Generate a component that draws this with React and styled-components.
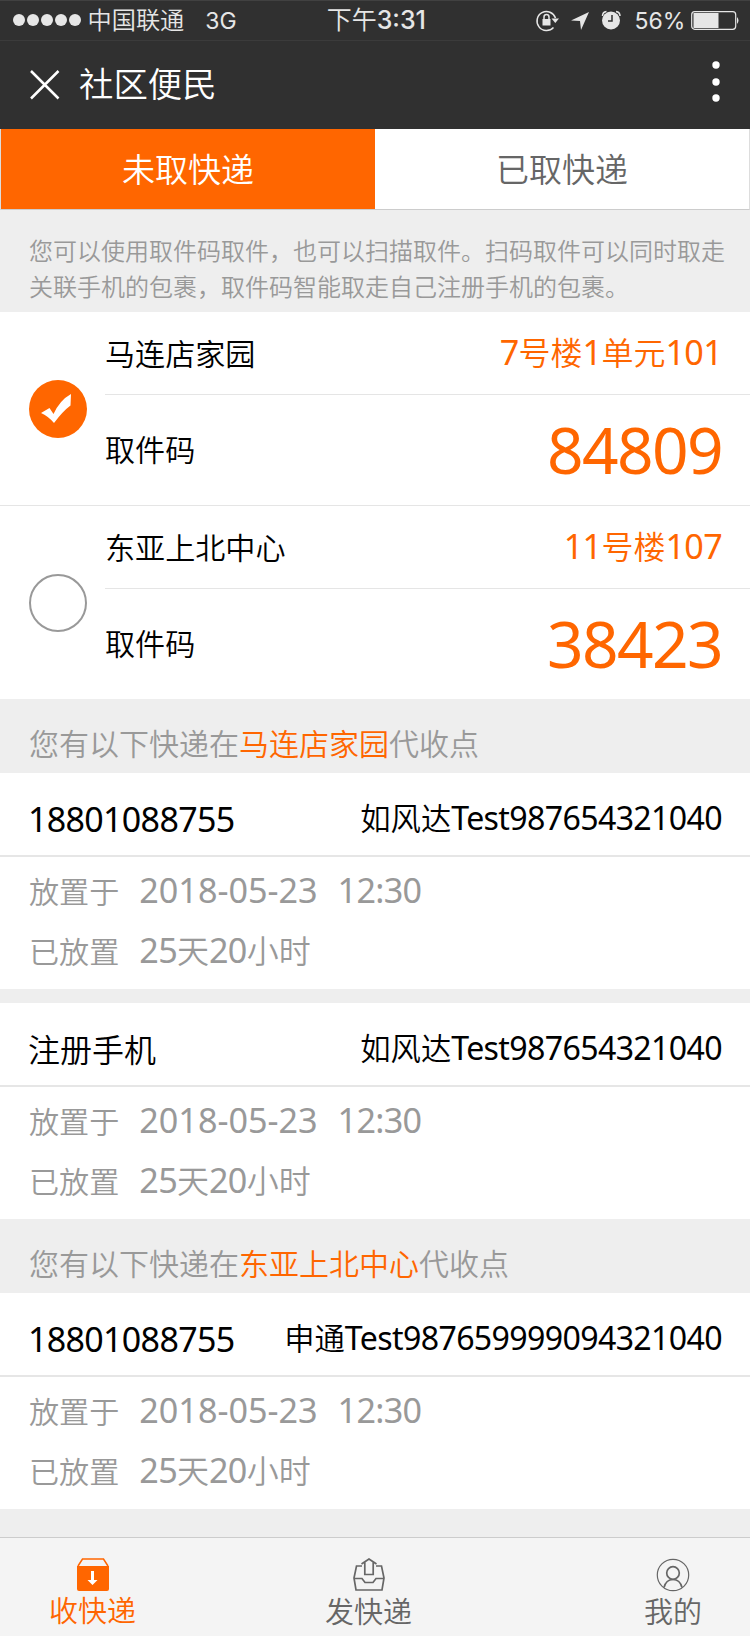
import React from "react";
import styled, { createGlobalStyle, css } from "styled-components";

const ORANGE = "#ff6600";
const CJK = '"Noto Sans CJK SC DemiLight", "Noto Sans CJK SC", sans-serif';

const GlobalStyle = createGlobalStyle`
  *, *::before, *::after { box-sizing: border-box; }
  body {
    margin: 0;
    background: #eee;
    color: #000;
    font-family: "Noto Sans", ${CJK};
    font-weight: 400;
  }
`;

const Page = styled.div`
  width: 750px;
  height: 1636px;
  display: flex;
  flex-direction: column;
  background: #eee;
  overflow: hidden;
`;

const Text = styled.span`
  display: block;
  white-space: pre;
  flex: none;
  line-height: 1;
  font-size: ${(p) => p.$size}px;
  color: ${(p) => p.$color || "inherit"};
  letter-spacing: ${(p) => p.$track || 0}px;
  margin-top: ${(p) => p.$top || 0}px;
  margin-left: ${(p) => p.$left || 0}px;
  font-weight: ${(p) => p.$weight || "inherit"};
`;

const Latin = styled.span`
  font-size: ${(p) => p.$scale}em;
  line-height: 0;
  letter-spacing: ${(p) => p.$spacing}em;
`;

/* Latin letters and digits are set slightly larger than the Han characters around them. */
function Mixed({ children, scale = 1.068, spacing = -0.02 }) {
  return children
    .split(/([\x21-\x7e]+)/)
    .filter(Boolean)
    .map((part, i) =>
      /^[\x21-\x7e]/.test(part) ? (
        <Latin key={i} $scale={scale} $spacing={spacing}>{part}</Latin>
      ) : (
        part
      )
    );
}

const StatusBar = styled.header`
  height: 41px;
  flex: none;
  display: flex;
  align-items: flex-start;
  padding-left: 12.5px;
  background: #303030;
  color: #e6e6e6;
  border-top: 1px solid #414141;
  border-bottom: 1px solid #3b3b3b;
  font-family: Inter, ${CJK};
`;

const Signal = styled.div`
  display: flex;
  gap: 2px;
  margin-top: 13px;
`;

const SignalDot = styled.i`
  width: 12px;
  height: 12px;
  border-radius: 50%;
  background: #e6e6e6;
`;

const StatusIcons = styled.svg`
  flex: none;
  display: block;
  width: ${(p) => p.$w}px;
  height: 38px;
  margin-left: ${(p) => p.$left || 0}px;
`;

const NavBar = styled.nav`
  height: 88px;
  flex: none;
  display: flex;
  align-items: flex-start;
  background: #303030;
  color: #fff;
`;

const CloseIcon = styled.svg`
  width: 32px;
  height: 32px;
  margin: 28px 0 0 29px;
`;

const MoreIcon = styled.svg`
  width: 8px;
  height: 44px;
  margin: 20px 30px 0 auto;
`;

const Tabs = styled.div`
  height: 81px;
  flex: none;
  display: grid;
  grid-template-columns: 1fr 1fr;
  border: 1px solid #ddd;
  border-top: 0;
  border-bottom-color: #ccc;
  background: #fff;
`;

const Tab = styled.div`
  display: flex;
  justify-content: center;
  background: ${(p) => (p.$active ? ORANGE : "#fff")};
  color: ${(p) => (p.$active ? "#fff" : "#666")};
`;

const Notice = styled.p`
  height: 102px;
  flex: none;
  margin: 0;
  padding: 22px 0 0 29px;
  font-family: ${CJK};
  font-size: 24px;
  line-height: 36px;
  color: #999;
  white-space: nowrap;
`;

const Choice = styled.section`
  height: ${(p) => (p.$last ? 193 : 194)}px;
  flex: none;
  display: flex;
  background: #fff;
  border-bottom: ${(p) => (p.$last ? 0 : 1)}px solid #e5e5e5;
`;

const Radio = styled.div`
  width: 58px;
  height: 58px;
  flex: none;
  margin: 68px 18px 0 29px;
  border-radius: 50%;
  ${(p) =>
    p.$checked
      ? css`background: ${ORANGE};`
      : css`border: 2px solid #999;`}
`;

const ChoiceBody = styled.div`
  flex: 1;
  display: flex;
  flex-direction: column;
`;

const ChoiceRow = styled.div`
  height: ${(p) => (p.$tall ? 110 : 83)}px;
  padding-right: 28px;
  display: flex;
  justify-content: space-between;
  align-items: flex-start;
  border-bottom: ${(p) => (p.$tall ? 0 : 1)}px solid #e5e5e5;
`;

const GroupTitle = styled.h2`
  height: 74px;
  flex: none;
  margin: 0;
  padding: 28px 0 0 29px;
  font-size: 30px;
  line-height: 1;
  font-weight: 400;
  font-family: ${CJK};
  color: #999;
  white-space: nowrap;
`;

const Place = styled.span`
  color: ${ORANGE};
`;

const Parcel = styled.article`
  height: 216px;
  flex: none;
  background: #fff;
  margin-top: ${(p) => (p.$spaced ? 14 : 0)}px;
`;

const ParcelHead = styled.div`
  height: 84px;
  padding: 0 28px;
  display: flex;
  justify-content: space-between;
  align-items: flex-start;
  border-bottom: 2px solid #e6e6e6;
`;

const ParcelLine = styled.div`
  height: 60px;
  padding-left: 29px;
  display: flex;
  align-items: flex-start;
  color: #999;
`;

const TabBar = styled.footer`
  height: 99px;
  flex: none;
  margin-top: auto;
  padding-top: 20px;
  display: flex;
  border-top: 1px solid #ccc;
  background: #f4f4f4;
`;

const TabItem = styled.div`
  display: flex;
  flex-direction: column;
  align-items: center;
  margin-left: ${(p) => p.$left}px;
  color: ${(p) => (p.$active ? ORANGE : "#666")};
  font-family: ${CJK};
`;

const TabIcon = styled.svg`
  width: 34px;
  height: 34px;
  display: block;
  flex: none;
`;

function ChoiceCard({ place, address, code, checked, last }) {
  return (
    <Choice $last={last}>
      <Radio $checked={checked}>
        {checked && (
          <svg width="58" height="58" viewBox="0 0 58 58">
            <path d="M12 33 L20.5 28 L24.5 34 Q31 20 42 14 L41.5 25.500 Q34 31 25 43 Q19 36 12 33Z" fill="#fff" />
          </svg>
        )}
      </Radio>
      <ChoiceBody>
        <ChoiceRow>
          <Text $size={30.1} $top={27}>{place}</Text>
          <Text $size={32} $top={25}><Place><Mixed>{address}</Mixed></Place></Text>
        </ChoiceRow>
        <ChoiceRow $tall>
          <Text $size={30.1} $top={40}>取件码</Text>
          <Text $size={64} $top={23} $track={-1.6} $color={ORANGE}>{code}</Text>
        </ChoiceRow>
      </ChoiceBody>
    </Choice>
  );
}

function ParcelCard({ owner, waybill, spaced }) {
  return (
    <Parcel $spaced={spaced}>
      <ParcelHead>
        <Text $size={32} $top={31}><Mixed scale={1.0625}>{owner}</Mixed></Text>
        <Text $size={30.3} $top={31}><Mixed scale={1.06}>{waybill}</Mixed></Text>
      </ParcelHead>
      <ParcelLine>
        <Text $size={30.1} $top={20}>放置于</Text>
        <Text $size={32} $top={18} $left={20}><Mixed spacing={0}>2018-05-23</Mixed></Text>
        <Text $size={32} $top={18} $left={20}><Mixed>12:30</Mixed></Text>
      </ParcelLine>
      <ParcelLine>
        <Text $size={30.1} $top={20}>已放置</Text>
        <Text $size={32} $top={18} $left={20}><Mixed>25天20小时</Mixed></Text>
      </ParcelLine>
    </Parcel>
  );
}

export default function App() {
  return (
    <Page>
      <GlobalStyle />
      <StatusBar>
        <Signal>
          {[0, 1, 2, 3, 4].map((n) => <SignalDot key={n} />)}
        </Signal>
        <Text $size={24.2} $top={8} $left={7}>中国联通</Text>
        <Text $size={23} $top={9} $left={21}>3G</Text>
        <Text $size={25} $top={7} $left={90} $weight={500}>下午3:31</Text>
        <StatusIcons $w={90} $left={109.500} viewBox="0 0 90 38" fill="none" stroke="#e6e6e6">
          <path d="M18.500 26.500 A9.500 9.500 0 1 1 20.500 17" strokeWidth="1.500" />
          <path d="M16.500 17.500 h7.500 l-3.700 4.500z" fill="#e6e6e6" stroke="none" />
          <path d="M7.500 18 h8 v6.500 h-8z" fill="#e6e6e6" stroke="none" />
          <path d="M9 18 v-2 a2.500 2.500 0 0 1 5 0 v2" strokeWidth="1.500" />
          <path d="M54 11 L46 29 L45 20 L36 19.500Z" fill="#e6e6e6" stroke="none" />
          <circle cx="76" cy="19.500" r="9" fill="#e6e6e6" stroke="none" />
          <path d="M77 14 v6 h-4" stroke="#303030" strokeWidth="1.500" />
          <path d="M67.500 15 q0-4 4-4.500 M85 15 q0-4-4-4.500" strokeWidth="1.500" />
        </StatusIcons>
        <Text $size={23} $top={9} $left={9}>56%</Text>
        <StatusIcons $w={50} $left={6} viewBox="0 0 50 38" fill="none">
          <rect x=".7" y="10.700" width="44" height="17.600" rx="3" stroke="#e6e6e6" strokeWidth="1.200" />
          <path d="M2.500 12 h25 v15 h-25z M46 16 q3 3.500 0 7z" fill="#e6e6e6" />
        </StatusIcons>
      </StatusBar>
      <NavBar>
        <CloseIcon viewBox="0 0 32 32">
          <path d="M2 2 L29.500 29.500 M29.500 2 L2 29.500" stroke="#fff" strokeWidth="2.500" />
        </CloseIcon>
        <Text $size={34.4} $top={26} $left={18}>社区便民</Text>
        <MoreIcon viewBox="0 0 8 44" fill="#fff">
          <circle cx="4" cy="4" r="3.700" />
          <circle cx="4" cy="21" r="3.700" />
          <circle cx="4" cy="37" r="3.700" />
        </MoreIcon>
      </NavBar>
      <Tabs>
        <Tab $active><Text $size={33} $top={24}>未取快递</Text></Tab>
        <Tab><Text $size={33} $top={24}>已取快递</Text></Tab>
      </Tabs>
      <Notice>
        您可以使用取件码取件，也可以扫描取件。扫码取件可以同时取走
        <br />
        关联手机的包裹，取件码智能取走自己注册手机的包裹。
      </Notice>
      <ChoiceCard checked place="马连店家园" address="7号楼1单元101" code="84809" />
      <ChoiceCard last place="东亚上北中心" address="11号楼107" code="38423" />
      <GroupTitle>您有以下快递在<Place>马连店家园</Place>代收点</GroupTitle>
      <ParcelCard owner="18801088755" waybill="如风达Test987654321040" />
      <ParcelCard spaced owner="注册手机" waybill="如风达Test987654321040" />
      <GroupTitle>您有以下快递在<Place>东亚上北中心</Place>代收点</GroupTitle>
      <ParcelCard owner="18801088755" waybill="申通Test987659999094321040" />
      <TabBar>
        <TabItem $active $left={49}>
          <TabIcon viewBox="0 0 34 34">
            <path d="M2 8 L6.500 1 H27.500 L32 8" fill="none" stroke={ORANGE} strokeWidth="1.500" />
            <path d="M1 8 H33 V31 Q33 33 31 33 H3 Q1 33 1 31Z" fill={ORANGE} />
            <path d="M15 13 h3 v9 h3.500 l-5 5 l-5-5 h3.500z" fill="#fff" />
          </TabIcon>
          <Text $size={29} $top={3}>收快递</Text>
        </TabItem>
        <TabItem $left={189}>
          <TabIcon viewBox="0 0 34 34" fill="none" stroke="currentColor" strokeWidth="1.700">
            <path d="M10 8 H4.500 L2 20 L4 32 H30 L32 20 L29.500 8 H24" />
            <path d="M2 20.500 H10 L13 24.500 H21 L24 20.500 H32" />
            <path d="M9.500 6 L17 1 L24.500 6 M12.800 4.500 V16.500 H21.200 V4.500" />
          </TabIcon>
          <Text $size={29} $top={4}>发快递</Text>
        </TabItem>
        <TabItem $left={232}>
          <TabIcon viewBox="0 0 34 34" fill="none" stroke="currentColor">
            <circle cx="17" cy="17" r="15.700" strokeWidth="1.200" />
            <circle cx="17" cy="15" r="6.300" strokeWidth="1.700" />
            <path d="M8 29.500 Q10 21.500 17 21.500 Q24 21.500 26 29.500" strokeWidth="1.700" />
          </TabIcon>
          <Text $size={29} $top={4}>我的</Text>
        </TabItem>
      </TabBar>
    </Page>
  );
}
